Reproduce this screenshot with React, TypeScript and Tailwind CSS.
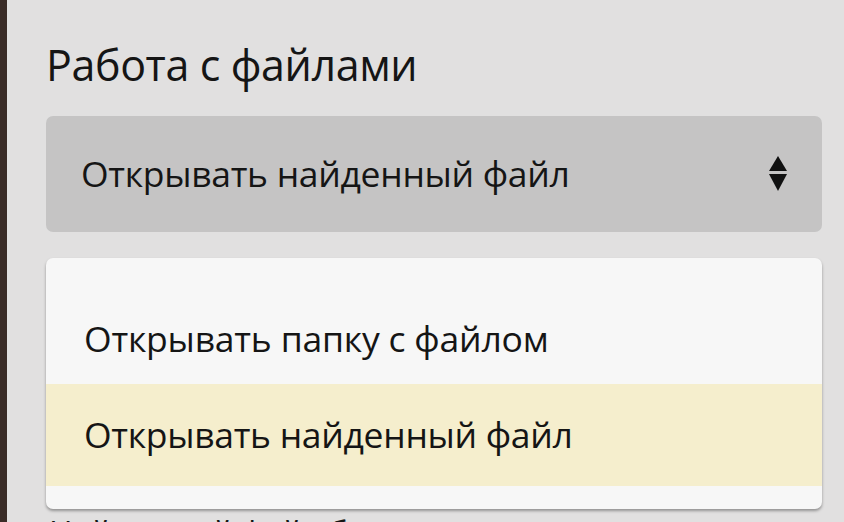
export default function App() {
  return (
    <div className="flex h-[522px] w-[844px] overflow-hidden bg-[#e1e0e0] font-['Open_Sans','Noto_Sans',sans-serif] text-[#151515]">
      <div className="w-[7px] shrink-0 bg-[#3a2c27]" />
      <div className="flex flex-1 flex-col pl-[39px] pr-[22px]">
        <h1 className="mt-[36px] h-[58px] shrink-0 text-[43px] leading-[58px] tracking-[-0.4px]">Работа с файлами</h1>
        <div className="mt-[22px] flex h-[116px] shrink-0 items-center justify-between rounded-[7px] bg-[#c5c4c4] pl-[35px] pr-[34px]">
          <span className="text-[35.5px] tracking-[-0.3px]">Открывать найденный файл</span>
          <svg width="20" height="38" viewBox="0 0 20 38" className="text-[#111]">
            <path d="M10 1 L19 16 L1 16 Z" fill="currentColor" />
            <path d="M1 19 L19 19 L10 36 Z" fill="currentColor" />
          </svg>
        </div>
        <div className="mt-[26px] flex h-[251px] shrink-0 flex-col rounded-[7px] bg-[#f7f7f7] pb-[23px] pt-[30px] shadow-[0_2px_3px_rgba(0,0,0,0.35)]">
          <div className="flex h-[96px] shrink-0 items-center pl-[38px] pt-[6px] text-[35.5px] tracking-[-0.2px]">Открывать папку с файлом</div>
          <div className="flex h-[102px] shrink-0 items-center bg-[#f5eecd] pl-[38px] text-[35.5px] tracking-[-0.3px]">Открывать найденный файл</div>
        </div>
        <p className="mt-[4px] shrink-0 whitespace-nowrap pl-[3px] text-[32px] leading-[40px]">Найденный файл будет открыт в программе</p>
      </div>
    </div>
  );
}
